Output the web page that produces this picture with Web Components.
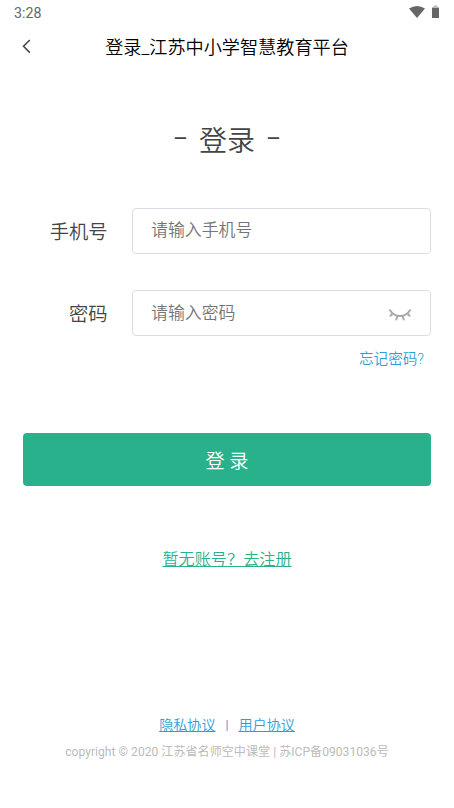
<!DOCTYPE html>
<html lang="zh-CN"><head><meta charset="utf-8"><title>登录</title>
<style>html,body{margin:0;height:100%;background:#fff}body{font-family:Roboto,"Noto Sans CJK SC",sans-serif;font-weight:350;overflow:hidden}</style></head>
<body><login-page></login-page>
<script>
const define=(name,html)=>customElements.define(name,class extends HTMLElement{
 constructor(){super();const t=document.createElement('template');t.innerHTML=html;this.attachShadow({mode:'open'}).append(t.content.cloneNode(true));}
});
define('status-bar',`<style>:host{display:flex;height:25px;box-sizing:border-box;padding:1px 14px 0;align-items:center;justify-content:space-between;color:#666;font-size:14.2px;font-weight:400;line-height:24px}
svg{display:block;margin:-2px -1px 0 0}</style><span>3:28</span>
<svg width="32" height="14" viewBox="0 0 32 14" fill="#666"><path d="M0 3.5Q8-1.5 16 3.5L8 13Z"/><path fill="#bbb" d="M23 2h1.5V.5h4V2H30v1.5h-7Z"/><path d="M23 3h7v10h-7Z"/></svg>`);
define('title-bar',`<style>:host{display:grid;grid-template-columns:50px 1fr 50px;height:42px;align-items:center;color:#000;font-size:18.15px;text-align:center}
svg{display:block;margin-left:22px}</style><svg width="10" height="16" viewBox="0 0 10 16" fill="none" stroke="#444" stroke-width="1.5"><path d="M7.8 2 1.5 8.3 7.8 14.6"/></svg><span><slot></slot></span>`);
define('form-field',`<style>:host{display:grid;grid-template-columns:84.5px 299.5px;column-gap:24px;align-items:center;height:46px}
label{font-size:19.3px;color:#444;text-align:right}div{box-sizing:border-box;height:46px;border:1px solid #dcdce6;border-radius:4px;display:flex;align-items:center;justify-content:space-between;padding:0 19px 0 18.5px;font-size:16.9px;color:#757575}.hint{margin-top:-4px}</style>
<label><slot name="label"></slot></label><div><span class="hint"><slot></slot></span><slot name="icon"></slot></div>`);
define('closed-eye',`<style>:host{display:block}svg{display:block;margin-top:4px}</style><svg width="22" height="12" viewBox="0 0 22 12" fill="none" stroke="#aaa" stroke-width="2" stroke-linecap="round"><path d="M1 1.2Q4.5 7 11 7T21 1.2M3.8 4.5 1.5 6.8M8.3 7.2 7.3 10.5M13.7 7.2l1 3.3M18.2 4.5l2.3 2.3"/></svg>`);
define('primary-button',`<style>:host{display:block}button{display:block;width:100%;height:53px;border:0;border-radius:4px;background:#29b18b;color:#fff;font:inherit;font-size:19.2px;padding:0}</style><button><slot></slot></button>`);
define('login-page',`<style>:host{display:flex;flex-direction:column;height:808px}h1{display:flex;justify-content:center;margin:52px 0 0;height:46px;line-height:46px;text-align:center;font-size:28px;font-weight:350;color:#444}
h1 span{width:26px;font-size:23px;font-weight:400;margin-top:-2px}h1 span:first-child{text-align:left}h1 span:last-child{text-align:right}
form-field{margin-left:23px}.phone{margin-top:42.5px}.pass{margin-top:36.5px}.forgot{align-self:flex-end;margin:11px 30px 0 0;font-size:14.6px;line-height:24px;color:#2c9fd9}
primary-button{margin:62px 23px 0}.reg{align-self:center;margin-top:61px;line-height:26px;font-size:16.15px;color:#29b18b;text-decoration:underline}
.links{display:flex;justify-content:center;gap:10px;margin-top:140px;font-size:14.1px;line-height:24px;color:#2c9fd9}.links u+span{font-size:12px;font-weight:400}.copy{text-align:center;font-size:12.05px;font-weight:400;line-height:20px;color:#bbb;margin-top:5px;letter-spacing:.04px}</style>
<status-bar></status-bar><title-bar>登录_江苏中小学智慧教育平台</title-bar><h1><span>–</span>登录<span>–</span></h1>
<form-field class="phone"><span slot="label">手机号</span>请输入手机号</form-field>
<form-field class="pass"><span slot="label">密码</span>请输入密码<closed-eye slot="icon"></closed-eye></form-field>
<span class="forgot">忘记密码?</span><primary-button>登 录</primary-button><span class="reg">暂无账号？去注册</span>
<div class="links"><u>隐私协议</u><span>|</span><u>用户协议</u></div><div class="copy">copyright © 2020 江苏省名师空中课堂 | 苏ICP备09031036号</div>`);
</script></body></html>
